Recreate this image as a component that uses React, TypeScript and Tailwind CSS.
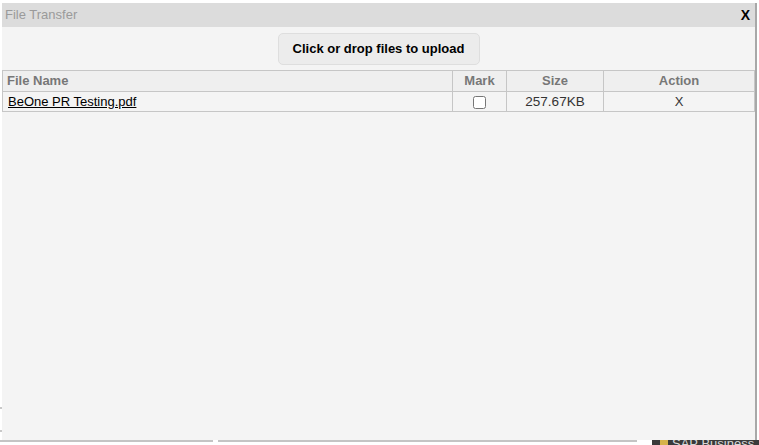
import React from 'react';

const cell = 'border border-[#c6c6c6] px-[4px] py-0 leading-[18px]';

export default function App() {
  return (
    <div
      className="relative w-[759px] h-[445px] overflow-hidden bg-white"
      style={{ fontFamily: '"Liberation Sans", Arial, sans-serif' }}
    >
      {/* page behind the dialog */}
      <div className="absolute left-0 top-[407px] w-[3px] h-[2px] bg-[#c8c8c8]" />
      <div className="absolute left-0 top-[430px] w-[3px] h-[2px] bg-[#c8c8c8]" />
      <div className="absolute left-0 top-[440px] w-[213px] h-[2px] bg-[#c4c4c4]" />
      <div className="absolute left-[218px] top-[440px] w-[419px] h-[2px] bg-[#c4c4c4]" />
      <div className="absolute left-[652px] top-[440px] w-[107px] h-[5px] bg-[#3a3a3a] overflow-hidden">
        <div className="flex items-start gap-[4px] pl-[8px] -mt-[3px]">
          <span className="w-[8px] h-[8px] bg-[#d6b24a] mt-[3px]" />
          <span className="text-[13px] leading-none text-[#d8d8d8]">SAP Business</span>
        </div>
      </div>

      {/* dialog */}
      <div className="absolute left-[2px] top-[3px] w-[753px] h-[437px] bg-[#f4f4f4] flex flex-col">
        <div className="h-[24px] bg-[#dcdcdc] flex items-center justify-between pl-[3px] pr-[5px]">
          <span className="text-[13px] text-[#9a9a9a]">File Transfer</span>
          <span className="text-[14px] font-bold text-black">X</span>
        </div>
        <div className="flex justify-center pt-[6px]">
          <button className="w-[202px] h-[32px] bg-[#ececec] border border-[#dedede] rounded-[5px] text-[13px] font-bold text-black">
            Click or drop files to upload
          </button>
        </div>
        <table className="mt-[5px] w-[753px] border-collapse text-[13px] table-fixed">
          <colgroup>
            <col className="w-[450px]" />
            <col className="w-[54px]" />
            <col className="w-[97px]" />
            <col />
          </colgroup>
          <thead>
            <tr className="h-[21px] bg-[#efefef] text-[#777777] font-bold">
              <th className={`${cell} text-left`}>File Name</th>
              <th className={cell}>Mark</th>
              <th className={cell}>Size</th>
              <th className={cell}>Action</th>
            </tr>
          </thead>
          <tbody>
            <tr className="h-[20px] text-[#333333]">
              <td className={`${cell} pl-[5px]`}>
                <a className="underline text-black" href="#">BeOne PR Testing.pdf</a>
              </td>
              <td className={`${cell} text-center`}>
                <input type="checkbox" className="w-[13px] h-[13px] align-middle" />
              </td>
              <td className={`${cell} text-center text-[13.5px]`}>257.67KB</td>
              <td className={`${cell} text-center`}>X</td>
            </tr>
          </tbody>
        </table>
      </div>
      <div className="absolute left-[755px] top-[3px] w-[2px] h-[437px] bg-[#a8a8a8]" />
    </div>
  );
}
